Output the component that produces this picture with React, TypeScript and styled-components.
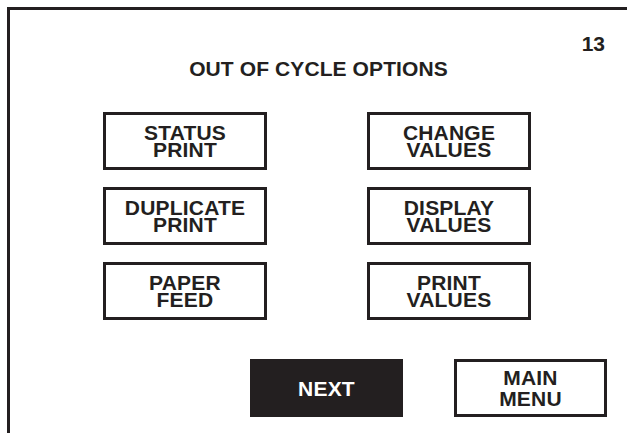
import React from "react";
import styled, { createGlobalStyle } from "styled-components";

const ink = "#231f20";

const GlobalStyle = createGlobalStyle`
  html, body {
    margin: 0;
    padding: 0;
    background: #ffffff;
  }
  body {
    font-family: "Liberation Sans", Arial, Helvetica, sans-serif;
    color: ${ink};
  }
`;

const Page = styled.div`
  width: 627px;
  height: 433px;
  padding: 7px 0 0 7px;
  box-sizing: border-box;
  overflow: hidden;
`;

const Frame = styled.div`
  height: 426px;
  border-top: 3px solid ${ink};
  border-left: 3px solid ${ink};
  box-sizing: border-box;
  display: flex;
  flex-direction: column;
`;

const PageNumber = styled.div`
  margin-top: 22px;
  padding-right: 22px;
  text-align: right;
  font-size: 21px;
  font-weight: 700;
  line-height: 24px;
`;

const Title = styled.h1`
  margin: 1px 0 0 0;
  text-align: center;
  font-size: 21px;
  font-weight: 700;
  line-height: 24px;
  letter-spacing: 0.1px;
`;

const OptionGrid = styled.div`
  margin: 31px 0 0 93px;
  display: grid;
  grid-template-columns: 164px 164px;
  grid-auto-rows: 58px;
  column-gap: 100px;
  row-gap: 17px;
`;

const OptionButton = styled.button<{ $dark?: boolean; $lead?: number }>`
  margin: 0;
  padding: 0;
  width: 100%;
  height: 58px;
  box-sizing: border-box;
  border: 3px solid ${ink};
  background: ${(p) => (p.$dark ? ink : "#ffffff")};
  color: ${(p) => (p.$dark ? "#ffffff" : ink)};
  font-family: "Liberation Sans", Arial, Helvetica, sans-serif;
  font-size: 21px;
  font-weight: 700;
  line-height: ${(p) => p.$lead ?? 17}px;
  letter-spacing: 0.2px;
  text-align: center;
  display: flex;
  flex-direction: column;
  align-items: center;
  justify-content: center;
  cursor: pointer;
`;

const BottomRow = styled.div`
  margin: 39px 0 0 240px;
  display: flex;
  gap: 51px;
`;

const NavButton = styled(OptionButton)`
  width: 153px;
`;

const options: [string, string][] = [
  ["STATUS", "PRINT"],
  ["CHANGE", "VALUES"],
  ["DUPLICATE", "PRINT"],
  ["DISPLAY", "VALUES"],
  ["PAPER", "FEED"],
  ["PRINT", "VALUES"],
];

export default function App() {
  return (
    <>
      <GlobalStyle />
      <Page>
        <Frame>
          <PageNumber>13</PageNumber>
          <Title>OUT OF CYCLE OPTIONS</Title>
          <OptionGrid>
            {options.map(([a, b], i) => (
              <OptionButton key={i}>
                <span>{a}</span>
                <span>{b}</span>
              </OptionButton>
            ))}
          </OptionGrid>
          <BottomRow>
            <NavButton $dark>
              <span>NEXT</span>
            </NavButton>
            <NavButton $lead={21}>
              <span>MAIN</span>
              <span>MENU</span>
            </NavButton>
          </BottomRow>
        </Frame>
      </Page>
    </>
  );
}
